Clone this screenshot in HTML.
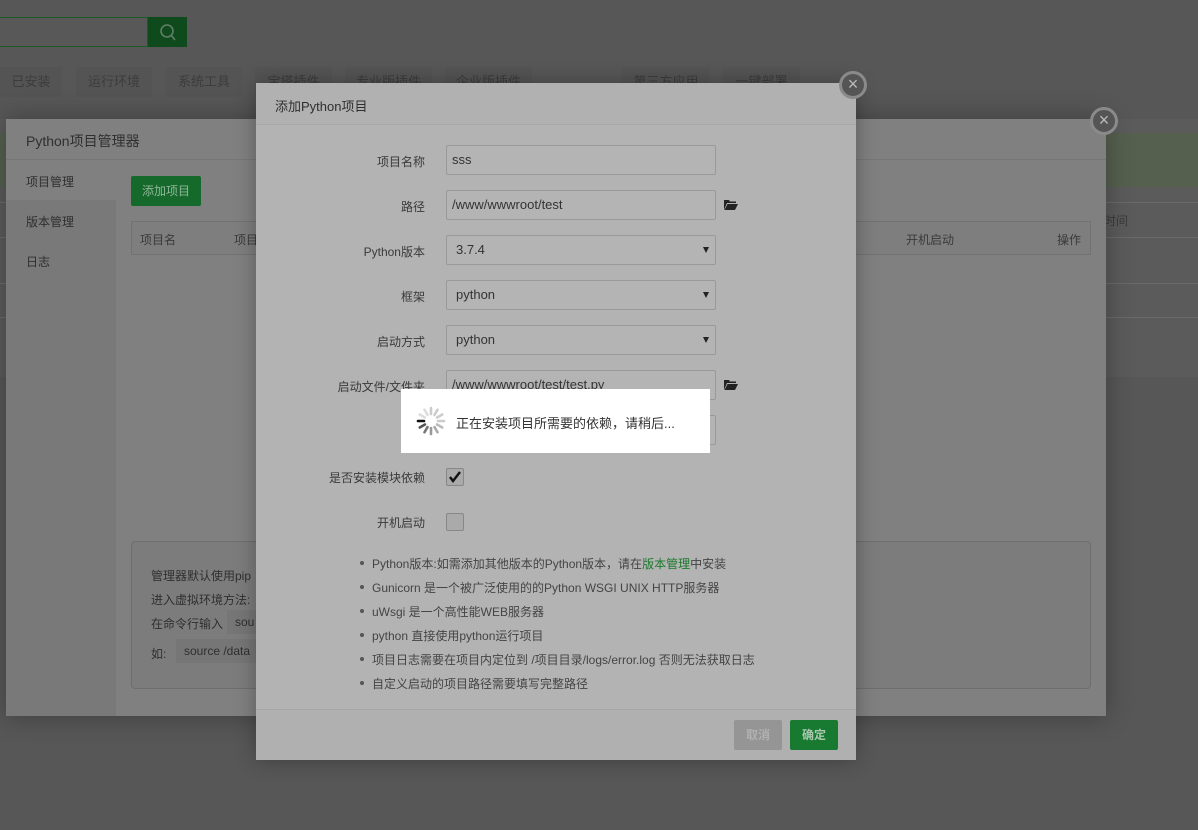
<!DOCTYPE html>
<html><head><meta charset="utf-8"><style>
*{box-sizing:border-box;margin:0;padding:0}
body{width:1198px;height:830px;overflow:hidden;background:#575757;font-family:"Liberation Sans","Noto Sans CJK SC",sans-serif;font-size:12px;color:#333;position:relative}
.a{position:absolute}
.tab{position:absolute;top:67px;height:30px;background:#545454;color:#3c3c3c;font-size:13px;text-align:center;line-height:30px}
.lbl{position:absolute;right:calc(1198px - 425px);width:150px;text-align:right;font-size:12px;color:#3a3a3a}
.inp{position:absolute;left:446px;width:270px;height:30px;border:1px solid #999;background:#b4b4b4;border-radius:2px;font-size:13px;color:#333;line-height:28px;padding-left:5px}
.sel{padding-left:9px}
.sel:after{content:"";position:absolute;right:6px;top:11px;border-left:3px solid transparent;border-right:3px solid transparent;border-top:6px solid #222}
.li{position:absolute;left:372px;font-size:12px;color:#444}
.li:before{content:"";position:absolute;left:-12px;top:6px;width:4px;height:4px;border-radius:50%;background:#555}
.close{position:absolute;width:28px;height:28px;border-radius:50%;background:#555;border:3px solid #8a8a8a;color:#bbb;font-size:18px;line-height:21px;text-align:center}
.folder{position:absolute;left:724px;width:14px;height:10px}
</style></head><body>
<!-- top bar -->
<div class="a" style="left:0;top:17px;width:148px;height:30px;border:1px solid #1d5a26;border-left:none;background:#585858"></div>
<div class="a" style="left:148px;top:17px;width:39px;height:30px;background:#0f4a1d"></div>
<svg class="a" style="left:158px;top:23px" width="20" height="20"><circle cx="9" cy="8" r="6" fill="none" stroke="#5f7f66" stroke-width="1.6"/><line x1="13" y1="12" x2="17" y2="17" stroke="#5f7f66" stroke-width="1.6"/></svg>
<div class="tab" style="left:0;width:62px">已安装</div>
<div class="tab" style="left:76px;width:76px">运行环境</div>
<div class="tab" style="left:166px;width:76px">系统工具</div>
<div class="tab" style="left:255px;width:77px">宝塔插件</div>
<div class="tab" style="left:345px;width:87px">专业版插件</div>
<div class="tab" style="left:445px;width:87px">企业版插件</div>
<div class="tab" style="left:622px;width:88px">第三方应用</div>
<div class="tab" style="left:723px;width:77px">一键部署</div>
<!-- right background strips -->
<div class="a" style="left:0;top:119px;width:1198px;height:258px;background:#5b5b5b"></div>
<div class="a" style="left:0;top:133px;width:1198px;height:54px;background:#56604f"></div>
<div class="a" style="left:0;top:202px;width:1198px;height:1px;background:#6a6a6a"></div>
<div class="a" style="left:0;top:237px;width:1198px;height:1px;background:#6a6a6a"></div>
<div class="a" style="left:0;top:283px;width:1198px;height:1px;background:#6a6a6a"></div>
<div class="a" style="left:0;top:317px;width:1198px;height:1px;background:#6a6a6a"></div>
<div class="a" style="left:1104px;top:212px;font-size:12px;color:#3a3a3a">时间</div>
<!-- back panel -->
<div class="a" style="left:6px;top:119px;width:1100px;height:597px;background:#808080;box-shadow:0 0 25px rgba(0,0,0,.3)"></div>
<div class="a" style="left:6px;top:159px;width:1100px;height:1px;background:#767676"></div>
<div class="a" style="left:26px;top:131px;font-size:14px;color:#2f2f2f">Python项目管理器</div>
<div class="a" style="left:6px;top:200px;width:110px;height:516px;background:#797979"></div>
<div class="a" style="left:26px;top:173px;font-size:12px;color:#2f2f2f">项目管理</div>
<div class="a" style="left:26px;top:213px;font-size:12px;color:#2f2f2f">版本管理</div>
<div class="a" style="left:26px;top:253px;font-size:12px;color:#2f2f2f">日志</div>
<div class="a" style="left:131px;top:176px;width:70px;height:30px;background:#15692a;border-radius:2px;color:#8fb79a;font-size:12px;line-height:30px;text-align:center">添加项目</div>
<div class="a" style="left:131px;top:221px;width:960px;height:34px;border:1px solid #727272;background:#7e7e7e"></div>
<div class="a" style="left:140px;top:231px;color:#3a3a3a">项目名</div>
<div class="a" style="left:234px;top:231px;color:#3a3a3a">项目</div>
<div class="a" style="left:906px;top:231px;color:#3a3a3a">开机启动</div>
<div class="a" style="left:1057px;top:231px;color:#3a3a3a">操作</div>
<div class="a" style="left:131px;top:541px;width:960px;height:148px;border:1px solid #6e6e6e;border-radius:4px;background:#7c7c7c"></div>
<div class="a" style="left:151px;top:567px;color:#2f2f2f">管理器默认使用pip</div>
<div class="a" style="left:151px;top:591px;color:#2f2f2f">进入虚拟环境方法:</div>
<div class="a" style="left:151px;top:615px;color:#2f2f2f">在命令行输入</div>
<div class="a" style="left:227px;top:610px;width:40px;height:24px;background:#767676;padding:5px 0 0 8px;color:#2f2f2f">sou</div>
<div class="a" style="left:151px;top:645px;color:#2f2f2f">如:</div>
<div class="a" style="left:176px;top:639px;width:90px;height:24px;background:#767676;padding:5px 0 0 8px;color:#2f2f2f">source /data</div>
<div class="close" style="left:1090px;top:107px">×</div>
<!-- front dialog -->
<div class="a" style="left:256px;top:83px;width:600px;height:677px;background:#b3b3b3;box-shadow:0 0 20px rgba(0,0,0,.3)"></div>
<div class="a" style="left:256px;top:83px;width:600px;height:42px;background:#b1b1b1;border-bottom:1px solid #a8a8a8"></div>
<div class="a" style="left:275px;top:96px;font-size:13px;color:#2f2f2f">添加Python项目</div>
<div class="close" style="left:839px;top:71px">×</div>
<div class="lbl" style="top:153px">项目名称</div>
<div class="inp" style="top:145px">sss</div>
<div class="lbl" style="top:198px">路径</div>
<div class="inp" style="top:190px">/www/wwwroot/test</div>
<div class="lbl" style="top:243px">Python版本</div>
<div class="inp sel" style="top:235px">3.7.4</div>
<div class="lbl" style="top:288px">框架</div>
<div class="inp sel" style="top:280px">python</div>
<div class="lbl" style="top:333px">启动方式</div>
<div class="inp sel" style="top:325px">python</div>
<div class="lbl" style="top:378px">启动文件/文件夹</div>
<div class="inp" style="top:370px">/www/wwwroot/test/test.py</div>
<div class="inp" style="top:415px"></div>
<svg class="folder" style="top:200px" viewBox="0 0 14 10"><path d="M0 0h5l1 1.5h6v1.5H3L0 10z M3.5 4H14L11 10H0.5z" fill="#222"/></svg>
<svg class="folder" style="top:380px" viewBox="0 0 14 10"><path d="M0 0h5l1 1.5h6v1.5H3L0 10z M3.5 4H14L11 10H0.5z" fill="#222"/></svg>
<div class="lbl" style="top:469px">是否安装模块依赖</div>
<div class="a" style="left:446px;top:468px;width:18px;height:18px;border:1px solid #888;border-radius:2px;background:#aaa"></div>
<svg class="a" style="left:448px;top:470px" width="14" height="14"><path d="M2 7l3 4 7-9" fill="none" stroke="#111" stroke-width="2.4"/></svg>
<div class="lbl" style="top:514px">开机启动</div>
<div class="a" style="left:446px;top:513px;width:18px;height:18px;border:1px solid #888;border-radius:2px;background:#aaa"></div>
<div class="li" style="top:555px">Python版本:如需添加其他版本的Python版本，请在<span style="color:#1d7a2c">版本管理</span>中安装</div>
<div class="li" style="top:579px">Gunicorn 是一个被广泛使用的的Python WSGI UNIX HTTP服务器</div>
<div class="li" style="top:603px">uWsgi 是一个高性能WEB服务器</div>
<div class="li" style="top:627px">python 直接使用python运行项目</div>
<div class="li" style="top:651px">项目日志需要在项目内定位到 /项目目录/logs/error.log 否则无法获取日志</div>
<div class="li" style="top:675px">自定义启动的项目路径需要填写完整路径</div>
<div class="a" style="left:256px;top:709px;width:600px;height:51px;background:#b0b0b0;border-top:1px solid #a6a6a6"></div>
<div class="a" style="left:734px;top:720px;width:48px;height:30px;background:#959595;border-radius:2px;color:#b0b0b0;font-weight:bold;line-height:30px;text-align:center">取消</div>
<div class="a" style="left:790px;top:720px;width:48px;height:30px;background:#187a30;border-radius:2px;color:#a9c8af;font-weight:bold;line-height:30px;text-align:center">确定</div>
<!-- loading -->
<div class="a" style="left:401px;top:389px;width:309px;height:64px;background:#fff"></div>
<svg class="a" style="left:415px;top:405px" width="32" height="32" viewBox="-16 -16 32 32">
<g stroke-width="2.6" stroke-linecap="round">
<line x1="0" y1="-7" x2="0" y2="-13" stroke="#ccc" transform="rotate(0)"/>
<line x1="0" y1="-7" x2="0" y2="-13" stroke="#ccc" transform="rotate(30)"/>
<line x1="0" y1="-7" x2="0" y2="-13" stroke="#ccc" transform="rotate(60)"/>
<line x1="0" y1="-7" x2="0" y2="-13" stroke="#ccc" transform="rotate(90)"/>
<line x1="0" y1="-7" x2="0" y2="-13" stroke="#bbb" transform="rotate(120)"/>
<line x1="0" y1="-7" x2="0" y2="-13" stroke="#aaa" transform="rotate(150)"/>
<line x1="0" y1="-7" x2="0" y2="-13" stroke="#999" transform="rotate(180)"/>
<line x1="0" y1="-7" x2="0" y2="-13" stroke="#777" transform="rotate(210)"/>
<line x1="0" y1="-7" x2="0" y2="-13" stroke="#555" transform="rotate(240)"/>
<line x1="0" y1="-7" x2="0" y2="-13" stroke="#111" transform="rotate(270)"/>
<line x1="0" y1="-7" x2="0" y2="-13" stroke="#ddd" transform="rotate(300)"/>
<line x1="0" y1="-7" x2="0" y2="-13" stroke="#ddd" transform="rotate(330)"/>
</g></svg>
<div class="a" style="left:456px;top:413px;font-size:13px;color:#333">正在安装项目所需要的依赖，请稍后...</div>
</body></html>
